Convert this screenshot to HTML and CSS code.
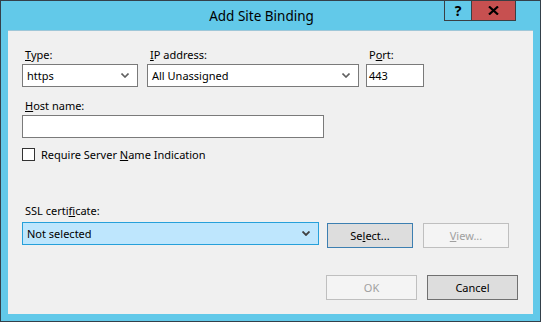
FILE: index.html
```html
<!DOCTYPE html>
<html lang="en">
<head>
    <meta charset="UTF-8">
    <title>Add Site Binding</title>
    <link rel="stylesheet" href="styles.css">
</head>
<body>
    <div class="window">
        <div class="titlebar">
            <span class="title">Add Site Binding</span>
            <div class="caption-btns">
                <div class="cap help">?</div>
                <div class="cap close">
                    <svg width="11" height="9" viewBox="0 0 11 9"><path d="M1 0.5 L10 8.5 M10 0.5 L1 8.5" stroke="#000" stroke-width="2.2"/></svg>
                </div>
            </div>
        </div>

        <div class="client">
            <div class="row">
                <div class="field">
                    <label><u>T</u>ype:</label>
                    <div class="combo w-type">
                        <span>https</span>
                        <svg class="chev" width="8" height="5" viewBox="0 0 8 5"><path d="M0.5 0.5 L4 4 L7.5 0.5" stroke="#606060" stroke-width="1.6" fill="none"/></svg>
                    </div>
                </div>
                <div class="field ip">
                    <label><u>I</u>P address:</label>
                    <div class="combo w-ip">
                        <span>All Unassigned</span>
                        <svg class="chev" width="8" height="5" viewBox="0 0 8 5"><path d="M0.5 0.5 L4 4 L7.5 0.5" stroke="#606060" stroke-width="1.6" fill="none"/></svg>
                    </div>
                </div>
                <div class="field port">
                    <label>P<u>o</u>rt:</label>
                    <div class="textbox w-port">443</div>
                </div>
            </div>

            <div class="field host">
                <label><u>H</u>ost name:</label>
                <div class="textbox w-host"></div>
            </div>

            <div class="check-row">
                <span class="checkbox"></span>
                <span>Require Server <u>N</u>ame Indication</span>
            </div>

            <div class="field ssl">
                <label>SSL certi<u>f</u>icate:</label>
                <div class="ssl-row">
                    <div class="combo w-ssl focused">
                        <span>Not selected</span>
                        <svg class="chev" width="8" height="5" viewBox="0 0 8 5"><path d="M0.5 0.5 L4 4 L7.5 0.5" stroke="#404040" stroke-width="1.8" fill="none"/></svg>
                    </div>
                    <div class="btn default">Se<u>l</u>ect...</div>
                    <div class="btn disabled view"><u>V</u>iew...</div>
                </div>
            </div>

            <div class="footer-row">
                <div class="btn disabled wide">OK</div>
                <div class="btn dark wide">Cancel</div>
            </div>
        </div>
    </div>
</body>
</html>
```

FILE: styles.css
```css
body {
    margin: 0;
    font-family: "Noto Sans", "Open Sans", sans-serif;
    font-size: 11px;
    color: #000;
}

.window {
    position: relative;
    box-sizing: border-box;
    width: 541px;
    height: 322px;
    background-color: #62c9e9;
    border: 1px solid #34404a;
}

.titlebar {
    height: 29px;
    display: flex;
    align-items: center;
    justify-content: center;
    padding-right: 18px;
}

.title {
    font-size: 13.5px;
    padding-top: 1px;
}

.caption-btns {
    position: absolute;
    top: -1px;
    right: 24px;
    display: flex;
}

.cap {
    box-sizing: border-box;
    height: 21px;
    display: flex;
    align-items: center;
    justify-content: center;
    border: 1px solid #3a3f44;
}

.help {
    width: 27px;
    font-weight: bold;
    font-size: 14px;
    border-right: none;
}

.close {
    width: 45px;
    background-color: #c75050;
}

.client {
    box-sizing: border-box;
    width: 525px;
    height: 284px;
    margin-left: 7px;
    padding: 16px 15px 0 14px;
    background-color: #f0f0f0;
    border-top: 1px solid #9fc7d8;
}

.row {
    display: flex;
}

.field label {
    display: block;
    line-height: 15px;
    height: 15px;
    margin-bottom: 2px;
    padding-left: 3px;
}

.ip {
    margin-left: 9px;
}

.port {
    margin-left: 7px;
}

.combo,
.textbox {
    box-sizing: border-box;
    height: 23px;
    display: flex;
    align-items: center;
    justify-content: space-between;
    padding: 0 8px 0 4px;
    background-color: #fff;
    border: 1px solid #7a7a7a;
}

.textbox {
    padding-left: 2px;
}

.w-type { width: 116px; }
.w-ip { width: 212px; }
.w-port { width: 58px; }
.w-host { width: 302px; }
.w-ssl { width: 297px; }

.host {
    margin-top: 11px;
}

.check-row {
    display: flex;
    align-items: center;
    gap: 6px;
    margin-top: 10px;
    height: 13px;
}

.checkbox {
    box-sizing: border-box;
    width: 13px;
    height: 13px;
    background-color: #fff;
    border: 1px solid #333;
}

.ssl {
    margin-top: 42px;
}

.ssl label {
    margin-bottom: 4px;
}

.ssl-row {
    display: flex;
    align-items: flex-start;
}

.focused {
    background-color: #bee6fd;
    border-color: #26a0da;
}

.btn {
    box-sizing: border-box;
    width: 86px;
    height: 25px;
    display: flex;
    align-items: center;
    justify-content: center;
    background-color: #dddddd;
    border: 1px solid #707070;
}

.ssl-row .btn {
    margin-top: 1px;
    margin-left: 8px;
}

.ssl-row .view {
    margin-left: 10px;
}

.default {
    border-color: #3c7fb1;
}

.disabled {
    background-color: #f4f4f4;
    border-color: #bfbfbf;
    color: #a0a0a0;
}

.footer-row {
    display: flex;
    justify-content: flex-end;
    gap: 10px;
    margin-top: 27px;
}

.wide {
    width: 91px;
}
```
